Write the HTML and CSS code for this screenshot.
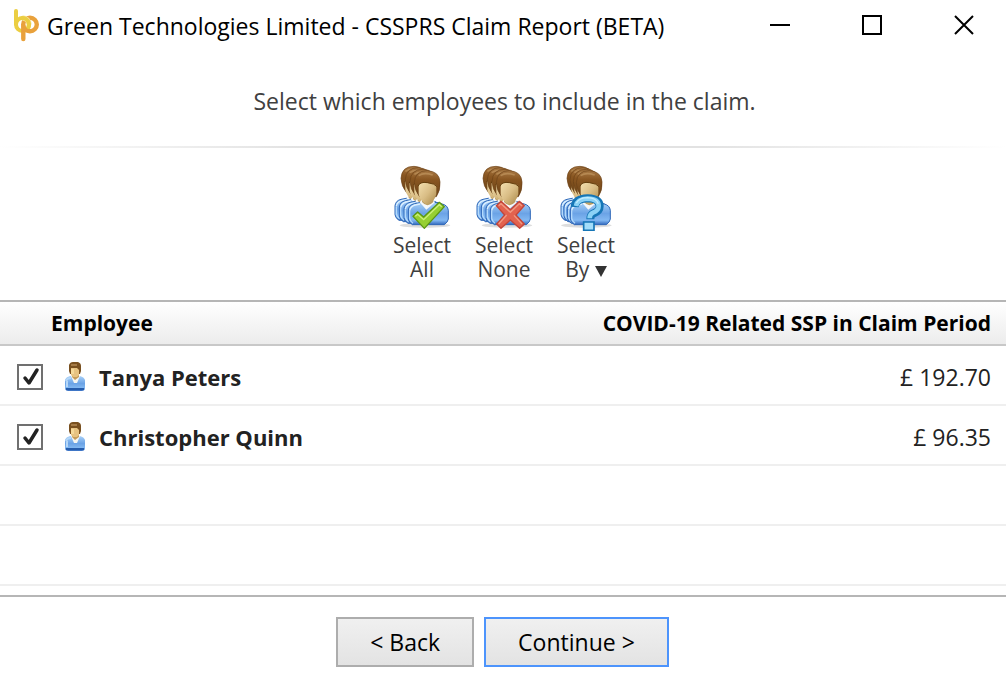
FILE: index.html
```html
<!DOCTYPE html>
<html lang="en">
<head>
<meta charset="utf-8">
<title>Green Technologies Limited - CSSPRS Claim Report (BETA)</title>
<link rel="stylesheet" href="styles.css">
</head>
<body>
<svg class="defs" aria-hidden="true">
  <defs>
    <linearGradient id="hair" x1="0" y1="0" x2="0" y2="1">
      <stop offset="0" stop-color="#a87843"/><stop offset="0.35" stop-color="#895621"/><stop offset="1" stop-color="#6b4418"/>
    </linearGradient>
    <linearGradient id="face" x1="0" y1="0" x2="1" y2="1">
      <stop offset="0" stop-color="#f3dfae"/><stop offset="0.5" stop-color="#d9bd85"/><stop offset="1" stop-color="#a98746"/>
    </linearGradient>
    <linearGradient id="shirt" x1="0" y1="0" x2="0" y2="1">
      <stop offset="0" stop-color="#a9d1f8"/><stop offset="0.5" stop-color="#6ba3e6"/><stop offset="0.8" stop-color="#82b8f2"/><stop offset="1" stop-color="#3168bd"/>
    </linearGradient>
    <g id="person">
      <path d="M70 165Q72 150 88 146L108 142H148L172 147Q188 151 190 166V192Q189 201 178 209H82Q71 202 70 192Z" fill="url(#shirt)" stroke="#2f68b8" stroke-width="3"/>
      <path d="M74 167Q76 154 90 150L105 147" fill="none" stroke="#dcf0ff" stroke-width="4"/>
      <path d="M74 168V190Q76 199 84 205" fill="none" stroke="#b4dafc" stroke-width="4"/>
      <path d="M104 142L124 164L150 142L143 132H112Z" fill="#f5f8fb"/>
      <path d="M111 125H145V141Q127 160 111 141Z" fill="#b99b60"/>
      <path d="M88 83Q90 47 127 47Q163 49 165 81Q167 106 154 125H104Q89 107 88 83Z" fill="url(#hair)" stroke="#6b4116" stroke-width="2"/>
      <path d="M101 91Q104 81 128 84Q149 86 154 92V118Q148 141 127 149Q105 140 101 117Z" fill="url(#face)"/>
      <path d="M99 94Q104 79 128 83Q150 86 156 95" fill="none" stroke="#65400f" stroke-width="3"/>
      <path d="M101 62Q117 51 143 60" fill="none" stroke="#c69d65" stroke-width="5" opacity=".6"/>
    </g>
    <g id="crowd">
      <ellipse cx="120" cy="211" rx="76" ry="7" fill="#777" opacity=".25"/>
      <use href="#person" x="-40" y="-13"/>
      <use href="#person" x="-27" y="-9"/>
      <use href="#person" x="-13" y="-4"/>
      <use href="#person"/>
    </g>
    <g id="small-person">
      <path d="M0 18Q1 15 5 14H15Q19 15 20 18V27Q19 29 17 29H3Q1 29 0 27Z" fill="url(#shirt)"/>
      <path d="M1 26H19V28H1Z" fill="#255cac"/>
      <path d="M1 19Q2 16 6 16M2 19V25" fill="none" stroke="#b5d7f8" stroke-width="2"/>
      <path d="M6 14H15L12 21H9Z" fill="#f6f6f2"/>
      <path d="M7 11H14V15L10 18L7 15Z" fill="#c69c5b"/>
      <path d="M4 3Q5 0 8 0H13Q16 1 16 4V9L15 12H5L4 9Z" fill="#79501f"/>
      <path d="M6 2H12V4H6Z" fill="#a47a45"/>
      <path d="M6 6H12L14 8V13L12 15H8L6 13Z" fill="#e7c382"/>
      <path d="M6 7H9V12H6Z" fill="#f5d99a"/>
    </g>
  </defs>
</svg>
<div class="window">
  <header class="titlebar">
    <svg class="logo" viewBox="0 0 26 34" fill="none" stroke-linecap="round" aria-hidden="true">
      <path d="M3 3V16" stroke="#ebce42" stroke-width="4"/>
      <circle cx="9.500" cy="16.500" r="6.500" stroke="#ebce42" stroke-width="4"/>
      <circle cx="17" cy="16.500" r="6.800" stroke="#e9a13b" stroke-width="4.400"/>
      <path d="M9.500 10A6.500 6.500 0 0 1 16 16.500" stroke="#f7e6a4" stroke-width="5.500" stroke-linecap="butt"/>
      <path d="M9.500 10A6.500 6.500 0 0 1 15.500 19" stroke="#ebce42" stroke-width="4"/>
      <path d="M10.300 18V31" stroke="#e9a13b" stroke-width="4.400"/>
    </svg>
    <h1 class="title">Green Technologies Limited - CSSPRS Claim Report (BETA)</h1>
    <div class="window-controls">
      <button type="button" class="window-button" aria-label="Minimize"><svg viewBox="0 0 20 20"><path d="M0 10H20"/></svg></button>
      <button type="button" class="window-button" aria-label="Maximize"><svg viewBox="0 0 20 20"><path d="M1 1H19V19H1Z"/></svg></button>
      <button type="button" class="window-button" aria-label="Close"><svg viewBox="0 0 20 20"><path d="M1 1L19 19M19 1L1 19"/></svg></button>
    </div>
  </header>
  <p class="prompt">Select which employees to include in the claim.</p>
  <div class="toolbar">
    <button type="button" class="tool">
      <svg class="tool-icon" viewBox="15 24 192 204" aria-hidden="true">
        <use href="#crowd"/>
        <path d="M84 184L98 171L116 186L163 142L178 155L118 220Z" fill="#96cf31" stroke="#5b9613" stroke-width="4" stroke-linejoin="round"/>
        <path d="M91 184L98 178L116 194L163 149L170 155" fill="none" stroke="#cdf07d" stroke-width="4"/>
      </svg>
      <span>Select<br>All</span>
    </button>
    <button type="button" class="tool">
      <svg class="tool-icon" viewBox="21 24 192 204" aria-hidden="true">
        <use href="#crowd" x="6"/>
        <path d="M94 152L108 139L136 164L163 139L178 152L153 180L178 207L164 220L136 195L108 220L95 207L119 180Z" fill="#e2624f" stroke="#c3463a" stroke-width="4" stroke-linejoin="round"/>
        <path d="M101 152L108 146L136 172L163 146L171 153M101 207L125 180M171 207L147 181" fill="none" stroke="#f19a82" stroke-width="4"/>
      </svg>
      <span>Select<br>None</span>
    </button>
    <button type="button" class="tool">
      <svg class="tool-icon" viewBox="27 24 192 204" aria-hidden="true">
        <ellipse cx="124" cy="211" rx="76" ry="7" fill="#777" opacity=".25"/>
        <use href="#person" x="-22" y="-13"/>
        <use href="#person" x="-13" y="-9"/>
        <use href="#person" x="-3" y="-4"/>
        <use href="#person" x="6"/>
        <path d="M89 156Q91 131 128 130Q164 131 164 154Q164 169 146 175Q136 179 136 193" fill="none" stroke="#1676b6" stroke-width="24"/>
        <path d="M116 201H147V226H116Z" fill="#a3ddfa" stroke="#1676b6" stroke-width="5"/>
        <path d="M93 153Q97 132 128 131Q161 132 161 153Q161 167 144 173Q134 177 134 190" fill="none" stroke="#8bd2f6" stroke-width="14"/>
        <path d="M94 144Q103 128 128 128Q154 129 160 146" fill="none" stroke="#c4edff" stroke-width="4"/>
      </svg>
      <span>Select<br>By <svg class="caret" viewBox="0 0 12 11" aria-hidden="true"><path d="M0 0H12L6 11Z"/></svg></span>
    </button>
  </div>
  <main class="list">
    <table class="employees">
      <thead>
        <tr><th class="name-head" scope="col">Employee</th><th class="amount" scope="col">COVID-19 Related SSP in Claim Period</th></tr>
      </thead>
      <tbody>
        <tr>
          <td><label class="employee"><input type="checkbox" class="check" checked><svg class="avatar" viewBox="0 0 20 30" aria-hidden="true"><use href="#small-person"/></svg><span>Tanya Peters</span></label></td>
          <td class="amount">£ 192.70</td>
        </tr>
        <tr>
          <td><label class="employee"><input type="checkbox" class="check" checked><svg class="avatar" viewBox="0 0 20 30" aria-hidden="true"><use href="#small-person"/></svg><span>Christopher Quinn</span></label></td>
          <td class="amount">£ 96.35</td>
        </tr>
      </tbody>
    </table>
    <div class="blank-rows"></div>
  </main>
  <footer class="footer">
    <button type="button" class="button">&lt; Back</button>
    <button type="button" class="button primary">Continue &gt;</button>
  </footer>
</div>
</body>
</html>
```
FILE: styles.css
```css
* { box-sizing: border-box; }
body {
  margin: 0;
  background: #fff;
  color: #222;
  font-family: "Open Sans", "Noto Sans", sans-serif;
  font-size: 23px;
}
button { font: inherit; color: inherit; border: 0; padding: 0; background: none; }
.defs { position: absolute; width: 0; height: 0; }
.window { display: flex; flex-direction: column; min-height: 100vh; }

.titlebar { display: flex; align-items: center; height: 50px; padding-left: 13px; }
.logo { width: 26px; height: 34px; margin-right: 8px; }
.title { flex: 1; margin: 0; padding-top: 2px; font-size: 23px; font-weight: 400; line-height: 32px; color: #000; white-space: nowrap; }
.window-controls { display: flex; gap: 8px; }
.window-button { display: flex; align-items: center; justify-content: center; width: 84px; height: 50px; }
.window-button svg { width: 20px; height: 20px; fill: none; stroke: #000; stroke-width: 2; }

.prompt {
  margin: 0;
  height: 98px;
  padding: 35px 0 0 3px;
  line-height: 32px;
  text-align: center;
  color: #404040;
  border-bottom: 2px solid;
  border-image: linear-gradient(90deg, #fff, #e2e2e2 30%, #e2e2e2 70%, #fff) 1;
}
.toolbar { display: flex; justify-content: center; padding: 15px 0 19px 2px; }
.tool { display: flex; flex-direction: column; align-items: center; gap: 2px; width: 82px; font-size: 21px; line-height: 24px; color: #404040; }
.tool-icon { width: 64px; height: 68px; }
.caret { width: 12px; height: 11px; fill: #333; }

.list { flex: 1; display: flex; flex-direction: column; border-top: 2px solid #b6b6b6; border-bottom: 2px solid #b6b6b6; }
.employees { width: 100%; border-collapse: separate; border-spacing: 0; }
.employees th {
  height: 44px;
  padding: 0 15px 0 51px;
  font-size: 21px;
  text-align: left;
  color: #000;
  background: linear-gradient(#fff, #ececec);
  border-bottom: 2px solid #c8c8c8;
}
.employees td { height: 60px; padding: 3px 15px 0 17px; border-bottom: 2px solid #efefef; }
.employees .amount { padding-left: 0; text-align: right; }
.employee { display: flex; align-items: center; font-size: 22px; font-weight: 700; }
.check {
  appearance: none;
  width: 26px;
  height: 26px;
  margin: 0 22px 0 0;
  border: 2px solid #707070;
  background: #fff;
}
.check:checked {
  background: #fff url("data:image/svg+xml,%3Csvg xmlns='http://www.w3.org/2000/svg' viewBox='0 0 22 22'%3E%3Cpath d='M6 12L10 17L18 4' fill='none' stroke='%23222' stroke-width='3.5' stroke-linecap='round' stroke-linejoin='round'/%3E%3C/svg%3E");
}
.avatar { width: 20px; height: 30px; margin-right: 14px; }
.blank-rows { flex: 1; background: repeating-linear-gradient(#fff 0 58px, #efefef 58px 60px); }

.footer { display: flex; justify-content: center; gap: 10px; padding: 20px 1px 15px 0; }
.button {
  height: 50px;
  padding: 0 32px;
  color: #000;
  border: 2px solid #adadad;
  background: linear-gradient(#f0f0f0, #e3e3e3);
}
.primary { border-color: #4d94fc; }
```
